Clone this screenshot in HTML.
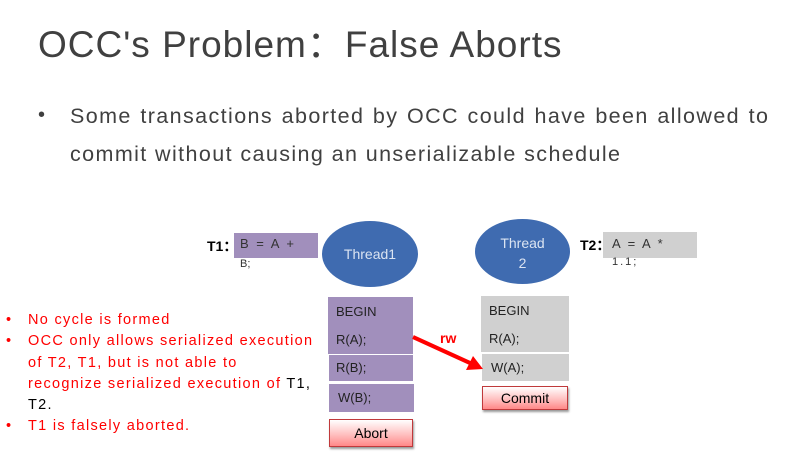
<!DOCTYPE html>
<html><head><meta charset="utf-8"><style>
body{margin:0;width:807px;height:462px;background:#fff;position:relative;overflow:hidden;font-family:"Liberation Sans",sans-serif}
.a{position:absolute;white-space:nowrap}
.t{left:38px;top:14px;font-size:37px;color:#404040;letter-spacing:1px}
.b{font-size:21.5px;color:#404040;letter-spacing:1.4px}
.box{position:absolute;font-size:13px;color:#333}
.p{background:#a18fbc}.g{background:#d0d0d0}
.el{position:absolute;background:#3f6bb0;border-radius:50%;color:#dbe4f2;font-size:14px;text-align:center}
.btn{position:absolute;border:1.5px solid #c0393b;background:linear-gradient(#fff,#fbb 60%,#f88);font-size:14px;text-align:center;box-shadow:1px 2px 2px #999}
.r{font-size:14.5px;color:#f00;letter-spacing:1.3px;line-height:21.3px}
</style></head><body>
<div class="a t">OCC's Problem：False Aborts</div>
<div class="a" style="left:38px;top:104px;font-size:20px;color:#404040">•</div>
<div class="a b" style="left:70px;top:104px;word-spacing:1.2px">Some transactions aborted by OCC could have been allowed to</div>
<div class="a b" style="left:70px;top:142px">commit without causing an unserializable schedule</div>

<div class="a" style="left:207px;top:236px;font-size:14px;font-weight:bold">T1：</div>
<div class="box p" style="left:234px;top:233px;width:84px;height:25px"></div>
<div class="a" style="left:240px;top:236px;font-size:13px;color:#333;letter-spacing:2px">B = A +</div>
<div class="a" style="left:240px;top:258px;font-size:11px;color:#333">B;</div>
<div class="el" style="left:322px;top:221px;width:96px;height:66px;line-height:66px">Thread1</div>
<div class="el" style="left:475px;top:219px;width:95px;height:65px;line-height:20px;padding-top:0"><div style="padding-top:14px">Thread<br>2</div></div>
<div class="a" style="left:580px;top:235px;font-size:14px;font-weight:bold">T2：</div>
<div class="box g" style="left:603px;top:232px;width:94px;height:26px"></div>
<div class="a" style="left:612px;top:236px;font-size:13px;color:#333;letter-spacing:2px">A = A *</div>
<div class="a" style="left:612px;top:256px;font-size:11px;color:#333;letter-spacing:2px">1.1;</div>

<div class="box p" style="left:328px;top:297px;width:85px;height:57px"></div>
<div class="a" style="left:336px;top:304px;font-size:13px;color:#222">BEGIN</div>
<div class="a" style="left:336px;top:332px;font-size:13px;color:#222">R(A);</div>
<div class="box p" style="left:329px;top:355px;width:84px;height:26px"></div>
<div class="a" style="left:336px;top:360px;font-size:13px;color:#222">R(B);</div>
<div class="box p" style="left:329px;top:384px;width:85px;height:28px"></div>
<div class="a" style="left:338px;top:390px;font-size:13px;color:#222">W(B);</div>
<div class="btn" style="left:329px;top:419px;width:82px;height:26px;line-height:26px">Abort</div>

<div class="box g" style="left:481px;top:296px;width:88px;height:56px"></div>
<div class="a" style="left:489px;top:303px;font-size:13px;color:#222">BEGIN</div>
<div class="a" style="left:489px;top:331px;font-size:13px;color:#222">R(A);</div>
<div class="box g" style="left:482px;top:354px;width:87px;height:27px"></div>
<div class="a" style="left:491px;top:360px;font-size:13px;color:#222">W(A);</div>
<div class="btn" style="left:482px;top:386px;width:84px;height:22px;line-height:22px">Commit</div>

<svg class="a" style="left:0;top:0" width="807" height="462"><line x1="413" y1="337" x2="470" y2="363" stroke="#f00" stroke-width="4"/><polygon points="483,369 466,370 473,356" fill="#f00"/></svg>
<div class="a" style="left:440px;top:330px;font-size:14px;color:#f00;font-weight:bold">rw</div>

<div class="a r" style="left:6px;top:310px">•<br>•<br><br><br><br>•</div>
<div class="a r" style="left:28px;top:310px">No cycle is formed<br>OCC only allows serialized execution<br>of T2, T1, but is not able to<br>recognize serialized execution of <span style="color:#000">T1,</span><br><span style="color:#000">T2.</span><br>T1 is falsely aborted.</div>
</body></html>
